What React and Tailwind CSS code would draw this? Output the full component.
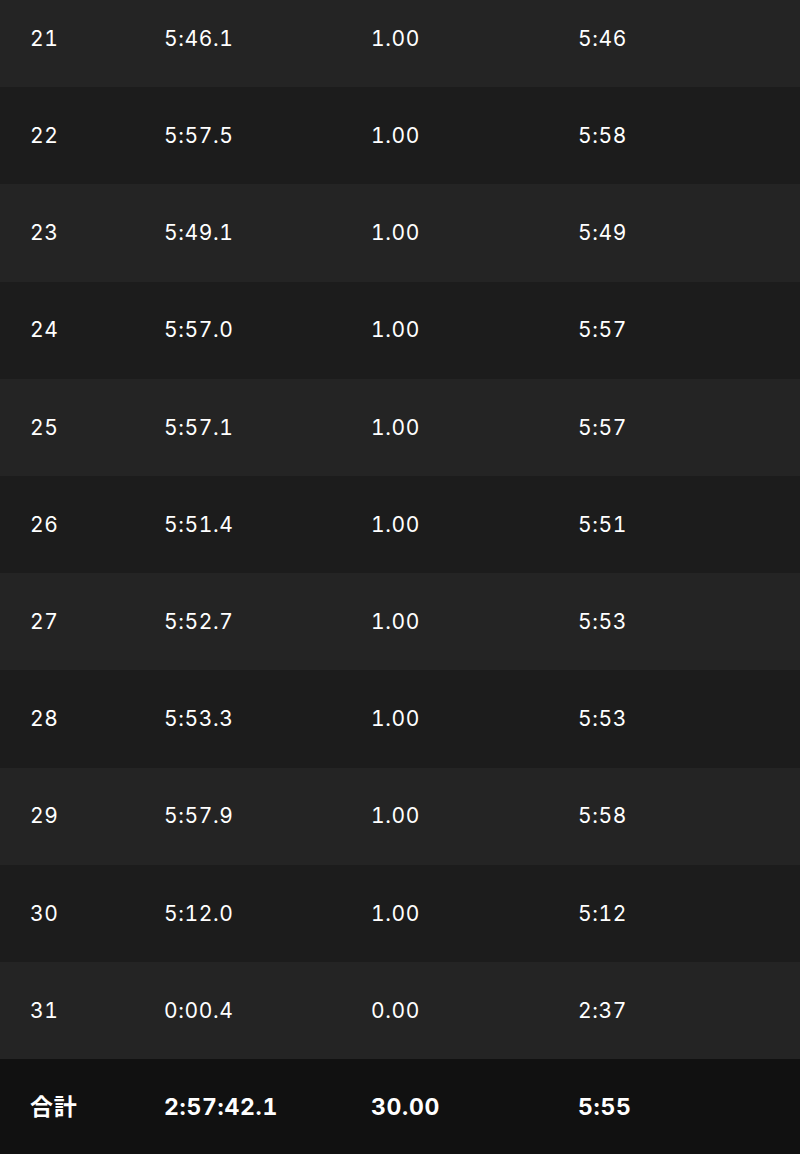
const rows = [
  ['21', '5:46.1', '1.00', '5:46'],
  ['22', '5:57.5', '1.00', '5:58'],
  ['23', '5:49.1', '1.00', '5:49'],
  ['24', '5:57.0', '1.00', '5:57'],
  ['25', '5:57.1', '1.00', '5:57'],
  ['26', '5:51.4', '1.00', '5:51'],
  ['27', '5:52.7', '1.00', '5:53'],
  ['28', '5:53.3', '1.00', '5:53'],
  ['29', '5:57.9', '1.00', '5:58'],
  ['30', '5:12.0', '1.00', '5:12'],
  ['31', '0:00.4', '0.00', '2:37'],
];

const Row = ({ cells, className }) => (
  <div className={`flex items-center h-[97.2px] pl-[30px] tabular-nums tracking-[0.03em] text-white ${className}`}>
    <div className="w-[134px]">{cells[0]}</div>
    <div className="w-[207px]">{cells[1]}</div>
    <div className="w-[207px]">{cells[2]}</div>
    <div>{cells[3]}</div>
  </div>
);

const App = () => {
  return (
    <div
      className="w-[800px] h-[1154px] overflow-hidden bg-[#111111]"
      style={{ fontFamily: 'Inter, "Noto Sans CJK JP", sans-serif' }}
    >
      <div className="-mt-[10px]">
        {rows.map((r, i) => (
          <Row
            key={r[0]}
            cells={r}
            className={`text-[21px] ${i % 2 === 0 ? 'bg-[#242424]' : 'bg-[#1c1c1c]'}`}
          />
        ))}
        <Row cells={['合計', '2:57:42.1', '30.00', '5:55']} className="bg-[#111111] text-[23px] font-bold" />
      </div>
    </div>
  );
};

export default App;
